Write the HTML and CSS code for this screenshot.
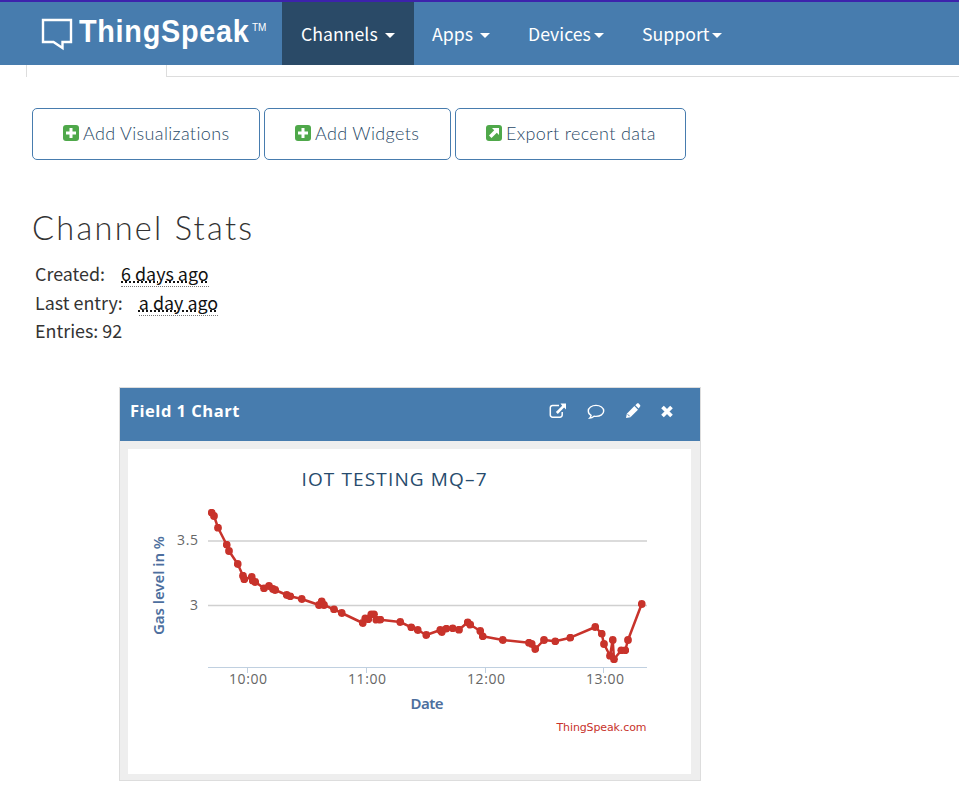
FILE: index.html
```
<!DOCTYPE html>
<html lang="en">
<head>
	<meta charset="UTF-8">
	<title>Channel Stats - ThingSpeak IoT</title>
	<link rel="stylesheet" href="styles.css">
</head>
<body>

	<nav class="navbar">
		<a class="brand">
			<svg class="brand-icon" width="32" height="34" viewBox="0 0 32 34"><path d="M2 3h28v22h-8.500v6l-9-6H2z" fill="none" stroke="#fff" stroke-width="2.400"/></svg>
			<span class="brand-name">ThingSpeak</span><span class="brand-tm">TM</span>
		</a>
		<ul class="menu">
			<li class="active"><span>Channels</span><b class="caret"></b></li>
			<li class="apps"><span>Apps</span><b class="caret"></b></li>
			<li class="devices"><span>Devices</span><b class="caret"></b></li>
			<li class="support"><span>Support</span><b class="caret"></b></li>
		</ul>
	</nav>

	<div class="tabs"><div class="tab"></div><div class="tabs-line"></div></div>

	<div class="content">
		<div class="buttons">
			<a class="btn btn-vis">
				<svg width="16" height="16" viewBox="0 0 16 16"><rect width="16" height="16" rx="3" fill="#4fa84a"/><path d="M8 3v10M3 8h10" stroke="#fff" stroke-width="3"/></svg>
				<span>Add Visualizations</span>
			</a>
			<a class="btn btn-wid">
				<svg width="16" height="16" viewBox="0 0 16 16"><rect width="16" height="16" rx="3" fill="#4fa84a"/><path d="M8 3v10M3 8h10" stroke="#fff" stroke-width="3"/></svg>
				<span>Add Widgets</span>
			</a>
			<a class="btn btn-exp">
				<svg width="16" height="16" viewBox="0 0 16 16"><rect width="16" height="16" rx="3" fill="#4fa84a"/><path d="M6 3h7v7l-2.200-2.200-5.300 5.200-2.500-2.500 5.200-5.300z" fill="#fff"/></svg>
				<span>Export recent data</span>
			</a>
		</div>

		<h2>Channel Stats</h2>

		<div class="stats">
			<div><span>Created:</span><abbr class="ago-created" title="6 days ago">6 days ago</abbr></div>
			<div><span>Last entry:</span><abbr class="ago-last" title="a day ago">a day ago</abbr></div>
			<div><span>Entries: 92</span></div>
		</div>

		<div class="panel">
			<div class="panel-head">
				<span class="panel-title">Field 1 Chart</span>
				<div class="panel-icons">
					<!-- external link -->
					<svg width="18" height="16" viewBox="0 0 18 16"><path d="M10 2.500H3.500a2.200 2.200 0 0 0-2.200 2.200v7.300a2.200 2.200 0 0 0 2.200 2.200H11a2.200 2.200 0 0 0 2.200-2.200V9" fill="none" stroke="#fff" stroke-width="1.500"/><path d="M11.500 0.500H17v6l-1.900-1.900-6.300 6.300-1.900-1.900 6.300-6.300z" fill="#fff"/></svg>
					<!-- comment -->
					<svg width="18" height="16" viewBox="0 0 18 16"><path d="M9 2.400c4.300 0 7.700 2.400 7.700 5.500s-3.400 5.500-7.700 5.500c-.7 0-1.400-.1-2-.2-1.200 1-2.700 1.700-4.300 1.900.7-.8 1.200-1.600 1.400-2.700C2.400 11.400 1.300 9.800 1.300 7.900c0-3.100 3.400-5.500 7.700-5.500z" fill="none" stroke="#fff" stroke-width="1.400"/></svg>
					<!-- edit -->
					<svg width="16" height="16" viewBox="0 0 16 16"><path d="M1 15l.8-4.300 7.600-7.600 3.600 3.600-7.600 7.500zM10.300 2.200L12 .6c.5-.5 1.200-.5 1.700 0l1.300 1.300c.5.5.5 1.200 0 1.700l-1.300 1.900z" fill="#fff"/><path d="M2.700 11.300l2 2" stroke="#477cae" stroke-width="1"/></svg>
					<!-- close -->
					<svg width="12" height="16" viewBox="0 0 12 16"><path d="M1.500 4l9 9M10.500 4l-9 9" stroke="#fff" stroke-width="3.700"/></svg>
				</div>
			</div>
			<div class="panel-body">
				<svg class="chart" width="563" height="325" viewBox="128 449 563 325">
					<defs>
						<marker id="dot" markerUnits="userSpaceOnUse" markerWidth="8" markerHeight="8" refX="4" refY="4"><circle cx="4" cy="4" r="3.900"/></marker>
					</defs>
					<text class="chart-title" x="301.500" y="486" textLength="185">IOT TESTING MQ&#8211;7</text>

					<path class="grid" d="M208 541H647M208 605.500H647"/>
					<path class="axis" d="M208 667.500H647M247.500 667v6M366.500 667v6M485.500 667v6M603.500 667v6"/>

					<text class="label" x="177" y="545" textLength="21">3.5</text>
					<text class="label" x="190" y="610">3</text>
					<text class="label" x="229" y="684" textLength="38">10:00</text>
					<text class="label" x="348" y="684" textLength="38">11:00</text>
					<text class="label" x="467" y="684" textLength="38">12:00</text>
					<text class="label" x="586" y="684" textLength="38">13:00</text>

					<text class="axis-title" transform="translate(164 635) rotate(-90)" textLength="99">Gas level in %</text>
					<text class="axis-title" x="410.500" y="709" textLength="33">Date</text>
					<text class="credits" x="556.500" y="731" textLength="90">ThingSpeak.com</text>

					<polyline class="series" points="211.700,512.700 214,516 218,527.700 226.700,544.700 229,551 237.700,564 243,575.700 244.300,579.300 251.700,577 252.700,580.700 255.300,582 264,588.300 269,586 273,589 275.300,590 286.700,595 290.300,596.300 301.700,599 319,605 321.700,601.300 324,605 334,609.300 341.700,613 362.700,623 365.300,618.300 368.300,619.300 371.300,614.300 374,614.300 376.300,619.700 380.300,619.700 400.300,622 411.300,627.300 417.700,630 426.300,635 440.300,630 441.700,632 446.300,628.700 452.700,628.300 459,629.700 467.700,622.300 470.300,624.700 480.300,631 482.700,636.300 502.700,640 529,642.700 531.700,644 535.300,649 544,640 555.300,641.300 570.300,637.700 595.300,627 601.700,633.700 604,644 610,655.700 612.700,640 614,659.300 621.300,650.300 625.300,650.300 628,640 641.700,604"/>
				</svg>
			</div>
		</div>
	</div>

</body>
</html>
```
FILE: styles.css
```
* {
	box-sizing: border-box;
}

body {
	margin: 0;
	background: #fff;
	color: #333;
	font-family: "Noto Sans CJK SC", "Noto Sans", sans-serif;
	font-size: 17.5px;
	overflow: hidden;
}

/* top bar */
.navbar {
	display: flex;
	height: 65px;
	border-top: 2px solid #3d23ac;
	background: #477cae;
	color: #fff;
}

.brand {
	display: flex;
	width: 282px;
	padding: 15px 0 0 41px;
	font-family: "Liberation Sans", Arial, sans-serif;
}

.brand-name {
	width: 173px;
	margin: -3px 0 0 6px;
	font-size: 32px;
	font-weight: bold;
	line-height: 34px;
	letter-spacing: 0.8px;
	transform: scaleX(0.9);
	transform-origin: left;
}

.brand-tm {
	font-size: 10px;
	line-height: 22px;
}

.menu {
	display: flex;
	margin: 0;
	padding: 0;
	list-style: none;
}

.menu li {
	display: flex;
	align-items: center;
	height: 63px;
	padding: 0 19px 2px;
	font-size: 17.7px;
	line-height: 24px;
}

.menu .active {
	width: 132px;
	background: #2a4a67;
}

.menu .apps {
	width: 95px;
	padding-left: 18px;
}

.menu .devices {
	width: 114px;
}

.menu .support {
	width: 118px;
}

.caret {
	margin: 5px 0 0 auto;
	border: 5px solid transparent;
	border-top-color: #fff;
	border-bottom: 0;
}

/* bottom edge of the tab strip */
.tabs {
	display: flex;
	height: 12px;
}

.tab {
	width: 141px;
	margin-left: 26px;
	border-left: 1px solid #ddd;
	border-right: 1px solid #ddd;
}

.tabs-line {
	flex: 1;
	border-bottom: 1px solid #ddd;
}

.content {
	padding: 31px 0 0 32px;
}

.buttons {
	display: flex;
	gap: 4px;
}

.btn {
	display: flex;
	align-items: center;
	gap: 4px;
	height: 52px;
	padding: 0 0 2px 30px;
	border: 1px solid #477cae;
	border-radius: 5px;
	color: #2a4a67;
	font-family: Lato, sans-serif;
	font-size: 18px;
	font-weight: 300;
	letter-spacing: 0.35px;
}

.btn-vis {
	width: 228px;
}

.btn-wid {
	width: 187px;
}

.btn-exp {
	width: 231px;
}

h2 {
	margin: 48px 0 0;
	font-family: Lato, sans-serif;
	font-size: 32.500px;
	font-weight: 300;
	line-height: 40px;
	letter-spacing: 2.300px;
}

.stats {
	padding: 11px 0 0 3px;
	font-size: 17.900px;
}

.stats div {
	display: flex;
	height: 28.5px;
	line-height: 28px;
}

abbr {
	height: 28px;
	border-bottom: 1px dotted #777;
	color: #111;
	text-decoration: underline dotted;
}

.ago-created {
	margin-left: 16px;
}

.ago-last {
	margin-left: 16px;
}

/* chart panel */
.panel {
	width: 582px;
	height: 394px;
	margin: 42px 0 0 87px;
	border: 1px solid #ddd;
	background: #eee;
}

.panel-head {
	display: flex;
	justify-content: space-between;
	height: 53px;
	padding: 15px 27px 0 10px;
	background: #477cae;
	color: #fff;
}

.panel-title {
	font-family: "Open Sans", "Trebuchet MS", sans-serif;
	font-size: 16.500px;
	font-weight: bold;
	line-height: 16px;
	letter-spacing: 0.5px;
}

.panel-icons {
	display: flex;
	gap: 20px;
	padding-right: 0.5px;
}

.panel-body {
	padding: 8px;
}

.chart {
	display: block;
	background: #fff;
	font-family: "Open Sans", "Lucida Grande", sans-serif;
}

.chart-title {
	fill: #274b6d;
	font-size: 19px;
}

.label {
	fill: #666;
	font-size: 14px;
}

.axis-title {
	fill: #4d6f9e;
	font-family: "Noto Sans", "Lucida Grande", sans-serif;
	font-size: 15px;
	font-weight: 600;
}

.credits {
	fill: #c8332b;
	font-family: "DejaVu Sans", Verdana, sans-serif;
	font-size: 11px;
}

.grid {
	stroke: #d0d0d0;
	stroke-width: 1.700;
}

.axis {
	stroke: #c0d0e0;
	fill: none;
}

.series {
	fill: none;
	stroke: #c8332b;
	stroke-width: 2.500;
	stroke-linejoin: round;
	marker-start: url(#dot);
	marker-mid: url(#dot);
	marker-end: url(#dot);
}

#dot circle {
	fill: #c8332b;
}
```
